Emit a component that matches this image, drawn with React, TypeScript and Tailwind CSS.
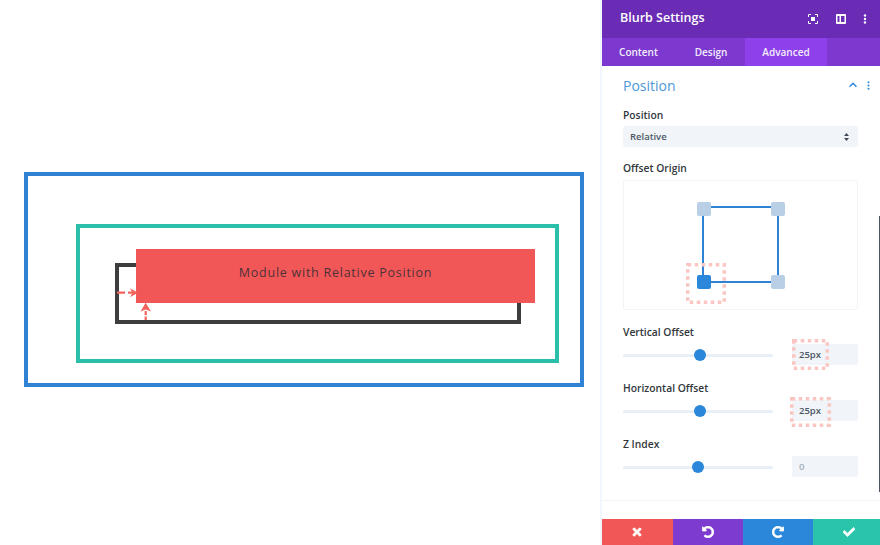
import { FaTimes, FaUndoAlt, FaRedoAlt, FaCheck } from "react-icons/fa";

function Dotted({ className, w, h }: { className: string; w: number; h: number }) {
  return (
    <svg className={"absolute " + className} width={w} height={h} viewBox={`0 0 ${w} ${h}`} fill="none">
      <rect x="1.750" y="1.750" width={w - 3.5} height={h - 3.5} stroke="#f9c6c1" strokeWidth="3.500" strokeDasharray="3.500 3.500" />
    </svg>
  );
}

function Slider({ label, left, value, muted, children }: { label: string; left: string; value: string; muted?: boolean; children?: React.ReactNode }) {
  return (
    <div className="h-[56px]">
      <div className="text-[10.300px] leading-[17px] font-semibold text-[#32373c]">{label}</div>
      <div className="relative mt-[3px] flex h-[21px] items-center justify-between">
        <div className="relative top-[0.5px] h-[3px] w-[150px] rounded bg-[#e8eff7]">
          <div className={"absolute top-[-4.5px] h-[12px] w-[12px] rounded-full bg-[#2b87da] " + left} />
        </div>
        <div className={"flex h-[21px] w-[66px] items-center rounded-[2px] bg-[#f1f5f9] pl-[7px] pt-[1px] text-[9.500px] font-semibold " + (muted ? "text-[#a3adb8]" : "text-[#4c5866]")}>{value}</div>
        {children}
      </div>
    </div>
  );
}

const bold = { stroke: "currentColor", strokeWidth: 30 };

export default function App() {
  return (
    <div className="flex h-[545px] w-[880px] overflow-hidden bg-white font-['Open_Sans',sans-serif]">
      <div className="w-[600px] shrink-0 pl-[24px] pt-[172px]">
        <div className="h-[215px] w-[560px] border-[4px] border-[#2f82d4] pl-[48px] pt-[48px]">
          <div className="h-[139px] w-[483px] border-[4px] border-[#29bfa8] pl-[35px] pt-[35px]">
            <div className="h-[61px] w-[406px] border-[4px] border-[#3d3d3f]">
              <div className="relative left-[17px] top-[-18px] flex h-[54px] w-[399px] items-center justify-center bg-[#f25757] pb-[6px] text-[12.500px] tracking-[0.75px] text-[#4f3138]">
                Module with Relative Position
                <svg className="absolute left-[-20px] top-[36px]" width="44" height="37" viewBox="0 0 44 37" fill="#f4635c">
                  <path d="M1 7.700H9M12 7.700H18" stroke="#f4635c" strokeWidth="2.200" fill="none" />
                  <path d="M14 3.200L22 7.700L14 12.200L16.500 7.700Z" />
                  <path d="M24.500 26.500L29.700 17.700L35 26.500L29.700 24.500Z" />
                  <path d="M29.700 26V35" stroke="#f4635c" strokeWidth="2.200" strokeDasharray="4 1.500" fill="none" />
                </svg>
              </div>
            </div>
          </div>
        </div>
      </div>
      <div className="relative flex w-[280px] shrink-0 flex-col border-l-[2px] border-[#f2f6fd] bg-white">
        <div className="flex h-[38px] items-center bg-[#6a2cb4] pl-[18px] pr-[12px] text-white">
          <div className="flex-1 pb-[1px] text-[12.500px] font-semibold">Blurb Settings</div>
          <svg className="mr-[18px]" width="10" height="10" viewBox="0 0 10 10" fill="none" stroke="#fff" strokeWidth="1">
            <path d="M.5 3V.5H3M7 .5h2.500V3M9.500 7v2.500H7M3 9.500H.5V7" />
            <rect x="3" y="3" width="4" height="4" fill="#fff" stroke="none" />
          </svg>
          <svg className="mr-[17px]" width="10" height="10" viewBox="0 0 10 10">
            <path fillRule="evenodd" d="M1 0h8a1 1 0 0 1 1 1v8a1 1 0 0 1-1 1H1a1 1 0 0 1-1-1V1a1 1 0 0 1 1-1zM1.500 2v6h2V2zM5 2v6h3.500V2z" fill="#fff" />
          </svg>
          <svg width="4" height="10" viewBox="0 0 4 10" fill="#fff">
            <circle cx="2" cy="1.500" r="1.200" /><circle cx="2" cy="5" r="1.200" /><circle cx="2" cy="8.500" r="1.200" />
          </svg>
          <div className="w-[1px]" />
        </div>
        <div className="flex h-[28px] bg-[#7d39cf] text-[10px] font-semibold text-[#f3ecfb]">
          <div className="flex w-[71px] items-center justify-center pl-[2px]">Content</div>
          <div className="flex w-[72px] items-center justify-center pl-[4px]">Design</div>
          <div className="flex w-[82px] items-center justify-center bg-[#8e41eb]">Advanced</div>
        </div>
        <div className="flex-1 pl-[21px] pr-[22px]">
          <div className="flex h-[40px] items-center justify-between pb-[2px]">
            <div className="text-[14px] text-[#4b98d8]">Position</div>
            <div className="mr-[-12px] flex items-center gap-[10px]">
              <svg width="8" height="6" viewBox="0 0 8 6" fill="none" stroke="#2b87da" strokeWidth="1.500"><path d="M.5 4.800L4 1.300l3.500 3.500" /></svg>
              <svg width="3" height="9" viewBox="0 0 3 9" fill="#2b87da"><circle cx="1.500" cy="1.200" r="1" /><circle cx="1.500" cy="4.500" r="1" /><circle cx="1.500" cy="7.800" r="1" /></svg>
            </div>
          </div>
          <div className="mt-[1px] text-[10.300px] leading-[16px] font-semibold text-[#32373c]">Position</div>
          <div className="mt-[3px] flex h-[21px] w-[235px] items-center justify-between rounded-[2px] bg-[#f1f5f9] pl-[7px] pr-[9px] pt-[1px] text-[9.500px] font-semibold text-[#4c5866]">
            Relative
            <svg width="5" height="8" viewBox="0 0 5 8" fill="#3f4a56"><path d="M2.500 0L5 3H0zM2.500 8L0 5h5z" /></svg>
          </div>
          <div className="mt-[13px] text-[10.300px] leading-[16px] font-semibold text-[#32373c]">Offset Origin</div>
          <div className="relative mt-[4px] h-[130px] w-[235px] rounded-[2px] border border-[#f1f5f9]">
            <div className="absolute left-[78px] top-[25px] h-[77px] w-[77px] border-[2px] border-[#2f82d4]" />
            <div className="absolute left-[73px] top-[21px] h-[14px] w-[14px] rounded-[2px] bg-[#b9cfe5]" />
            <div className="absolute left-[147px] top-[21px] h-[14px] w-[14px] rounded-[2px] bg-[#b9cfe5]" />
            <div className="absolute left-[147px] top-[94px] h-[14px] w-[14px] rounded-[2px] bg-[#b9cfe5]" />
            <div className="absolute left-[73px] top-[94px] h-[14px] w-[14px] rounded-[2px] bg-[#2b87da]" />
            <Dotted className="left-[62px] top-[82px]" w={40} h={41} />
          </div>
          <div className="mt-[14px]">
            <Slider label="Vertical Offset" left="left-[71px]" value="25px">
              <Dotted className="left-[169px] top-[-5px]" w={37} h={31} />
            </Slider>
            <Slider label="Horizontal Offset" left="left-[71px]" value="25px">
              <Dotted className="left-[167px] top-[-3px]" w={41} h={30} />
            </Slider>
            <Slider label="Z Index" left="left-[69px]" value="0" muted />
          </div>
        </div>
        <div className="absolute bottom-[44px] left-0 right-0 h-px bg-[#f1f5f9]" />
        <div className="absolute right-0 top-[216px] h-[276px] w-px bg-[#4b5563]" />
        <div className="flex h-[26px] text-[12px] text-white">
          <div className="flex w-[70.500px] items-center justify-center bg-[#f25757]"><FaTimes {...bold} /></div>
          <div className="flex w-[70.500px] items-center justify-center bg-[#7e3bd0]"><FaUndoAlt {...bold} /></div>
          <div className="flex w-[70px] items-center justify-center bg-[#2b87da]"><FaRedoAlt {...bold} /></div>
          <div className="flex flex-1 items-center justify-center bg-[#29c4a9] pl-[4px]"><FaCheck {...bold} /></div>
        </div>
      </div>
    </div>
  );
}
